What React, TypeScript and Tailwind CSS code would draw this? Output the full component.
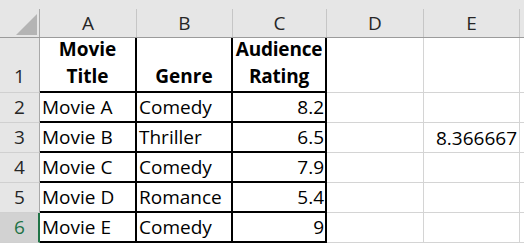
const columns = [
  { label: 'A', w: 'w-[97px]' },
  { label: 'B', w: 'w-[96px]' },
  { label: 'C', w: 'w-[94px]' },
  { label: 'D', w: 'w-[97px]' },
  { label: 'E', w: 'w-[96px]' },
]

const movies = [
  ['Movie A', 'Comedy', '8.2', ''],
  ['Movie B', 'Thriller', '6.5', '8.366667'],
  ['Movie C', 'Comedy', '7.9', ''],
  ['Movie D', 'Romance', '5.4', ''],
  ['Movie E', 'Comedy', '9', ''],
]

export default function App() {
  return (
    <div className="w-[524px] h-[243px] overflow-hidden bg-white font-['Open_Sans',sans-serif] text-[19px] text-black">
      {/* Column headers */}
      <div className="flex h-[38px] bg-[#e6e6e6] border-b border-[#9b9b9b]">
        <div className="w-[40px] shrink-0 pt-[9px]">
          <div className="h-full border-r border-[#a9a9a9] flex items-end justify-end pr-[2px] pb-[2px]">
            <svg width="21" height="21" viewBox="0 0 21 21">
              <path d="M21 0V21H0Z" fill="#b4b4b4" />
            </svg>
          </div>
        </div>
        {columns.map((c) => (
          <div key={c.label} className={`${c.w} shrink-0 pt-[9px]`}>
            <div className="h-full border-r border-[#c6c6c6] flex items-center justify-center pt-[1px] leading-[27px] text-[#262626]">
              {c.label}
            </div>
          </div>
        ))}
      </div>

      {/* Row 1: headings */}
      <div className="flex h-[55px]">
        <div className="w-[40px] shrink-0 bg-[#e6e6e6] border-r border-b border-r-[#a9a9a9] border-b-[#d0d0d0] flex items-end justify-center pb-[2px] leading-[27px] text-[#262626]">
          1
        </div>
        <div className="w-[97px] shrink-0 border-r-2 border-b-2 border-black flex flex-col items-center justify-end pb-[1px] leading-[27px] font-bold">
          <span>Movie</span>
          <span>Title</span>
        </div>
        <div className="w-[96px] shrink-0 border-r-2 border-b-2 border-black flex items-end justify-center pb-[1px] leading-[27px] font-bold">
          Genre
        </div>
        <div className="w-[94px] shrink-0 border-r-2 border-b-2 border-black flex flex-col items-center justify-end pb-[1px] leading-[27px] font-bold tracking-[-0.2px]">
          <span>Audience</span>
          <span>Rating</span>
        </div>
        <div className="w-[97px] shrink-0 border-r border-b border-[#d4d4d4]" />
        <div className="w-[96px] shrink-0 border-r border-b border-[#d4d4d4]" />
        <div className="flex-1 border-b border-[#d4d4d4]" />
      </div>

      {/* Data rows */}
      {movies.map(([title, genre, rating, extra], i) => {
        const selected = i === 4
        return (
          <div key={title} className="flex h-[30px]">
            <div
              className={
                selected
                  ? 'w-[40px] shrink-0 bg-[#d2d2d2] border-r-2 border-b border-r-[#217346] border-b-[#d0d0d0] flex items-end justify-center pl-[1px] pb-[1px] leading-[27px] text-[#217346]'
                  : 'w-[40px] shrink-0 bg-[#e6e6e6] border-r border-b border-r-[#a9a9a9] border-b-[#d0d0d0] flex items-end justify-center pb-[1px] leading-[27px] text-[#262626]'
              }
            >
              {i + 2}
            </div>
            <div className="w-[97px] shrink-0 border-r-2 border-b-2 border-black flex items-end pl-[2px] leading-[27px]">
              {title}
            </div>
            <div className="w-[96px] shrink-0 border-r-2 border-b-2 border-black flex items-end pl-[2px] leading-[27px]">
              {genre}
            </div>
            <div className="w-[94px] shrink-0 border-r-2 border-b-2 border-black flex items-end justify-end pr-[1px] leading-[27px]">
              {rating}
            </div>
            <div className="w-[97px] shrink-0 border-r border-b border-[#d4d4d4]" />
            <div className="w-[96px] shrink-0 border-r border-b border-[#d4d4d4] flex items-end justify-end pr-[2px] leading-[27px]">
              {extra}
            </div>
            <div className="flex-1 border-b border-[#d4d4d4]" />
          </div>
        )
      })}
    </div>
  )
}
